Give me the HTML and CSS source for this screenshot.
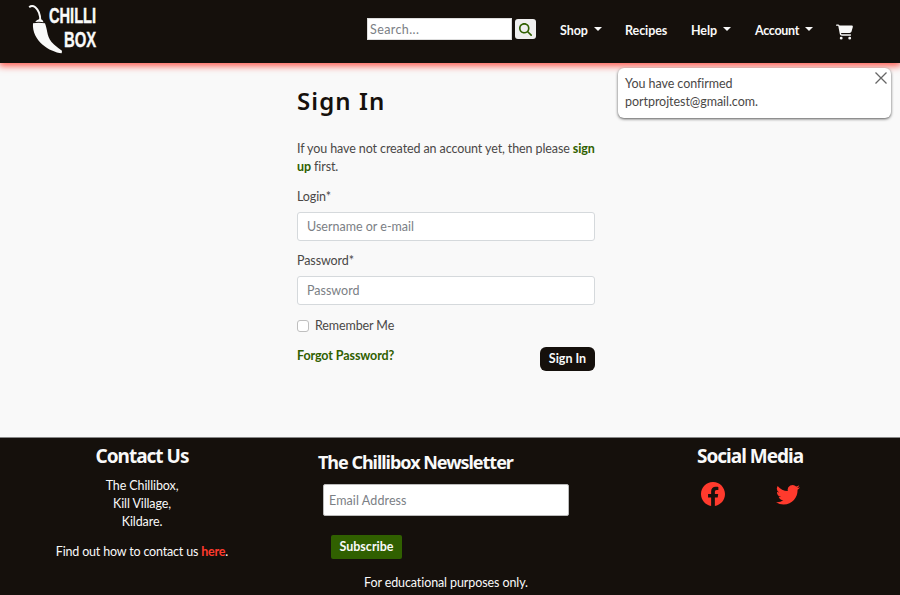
FILE: index.html
```html
<!DOCTYPE html>
<html lang="en">
<head>
<meta charset="utf-8">
<title>Sign In</title>
<link rel="stylesheet" href="styles.css">
</head>
<body>
<header class="header">
  <a class="logo">
    <svg width="76" height="58" viewBox="0 -4 76 58">
      <path d="M1.200 3.200Q4 .8 7.300 3.200Q12.300 7.500 12.300 16.500" fill="none" stroke="#f9f9f9" stroke-width="2"/>
      <path d="M7.200 18Q8 16 12 14.800Q15 15.800 15.600 18.200Q11.500 17.200 7.200 18Z" fill="#f9f9f9"/>
      <path d="M5 19.200Q10 18.300 17 19.200C20 27 18.500 34 26 40.500Q30 44 34 46.800L33.700 49.300C22 48 3.500 37 5 19.200Z" fill="#f9f9f9"/>
      <text x="21" y="18.700" font-size="22.500" textLength="47" lengthAdjust="spacingAndGlyphs">CHILLI</text>
      <text x="36" y="42.700" font-size="22.500" textLength="32" lengthAdjust="spacingAndGlyphs">BOX</text>
    </svg>
  </a>
  <form class="search">
    <input class="search-input" type="text" placeholder="Search...">
    <button class="search-button" type="button" aria-label="Search"><svg width="13" height="13" viewBox="0 0 512 512"><path fill="#306000" d="M416 208c0 45.900-14.900 88.300-40 122.700L502.600 457.400c12.500 12.500 12.500 32.800 0 45.300s-32.800 12.500-45.300 0L330.700 376c-34.400 25.200-76.800 40-122.700 40C93.100 416 0 322.900 0 208S93.100 0 208 0S416 93.100 416 208zM208 352a144 144 0 1 0 0-288 144 144 0 1 0 0 288z"/></svg></button>
  </form>
  <nav class="nav">
    <a class="nav-shop caret">Shop</a>
    <a class="nav-recipes">Recipes</a>
    <a class="nav-help caret">Help</a>
    <a class="nav-account caret">Account</a>
    <a class="cart"><svg width="17" height="16" viewBox="0 0 576 512"><path fill="#f9f9f9" d="M0 24C0 10.700 10.700 0 24 0H69.500c22 0 41.500 12.800 50.600 32h411c26.300 0 45.500 25 38.600 50.400l-41 152.300c-8.500 31.400-37 53.300-69.500 53.300H170.700l5.400 28.500c2.200 11.300 12.100 19.500 23.600 19.500H488c13.300 0 24 10.700 24 24s-10.700 24-24 24H199.700c-34.600 0-64.300-24.600-70.700-58.500L77.400 54.500c-.7-3.800-4-6.500-7.900-6.500H24C10.700 48 0 37.300 0 24zM128 464a48 48 0 1 1 96 0 48 48 0 1 1-96 0zm336-48a48 48 0 1 1 0 96 48 48 0 1 1 0-96z"/></svg></a>
  </nav>
</header>
<div class="toast">
  <p>You have confirmed<br>portprojtest@gmail.com.</p>
  <svg class="toast-close" width="12" height="12" viewBox="0 0 12 12"><path d="M.5 .5l11 11M11.500 .5l-11 11" stroke="#666" stroke-width="1.300"/></svg>
</div>
<main class="signin">
  <h1>Sign In</h1>
  <p class="intro">If you have not created an account yet, then please <a>sign<br>up</a> first.</p>
  <label class="label-login" for="login">Login*</label>
  <input class="field field-login" id="login" type="text" placeholder="Username or e-mail">
  <label class="label-password" for="password">Password*</label>
  <input class="field" id="password" type="password" placeholder="Password">
  <label class="remember"><input type="checkbox"><span>Remember Me</span></label>
  <div class="actions">
    <a class="forgot">Forgot Password?</a>
    <button class="submit" type="button"><span>Sign In</span></button>
  </div>
</main>
<footer class="footer">
  <section class="contact">
    <h2>Contact Us</h2>
    <p class="address">The Chillibox,<br>Kill Village,<br>Kildare.</p>
    <p class="find">Find out how to contact us <a>here</a>.</p>
  </section>
  <section class="newsletter">
    <h2>The Chillibox Newsletter</h2>
    <input class="email" type="email" placeholder="Email Address">
    <button class="subscribe" type="button">Subscribe</button>
    <p class="educational">For educational purposes only.</p>
  </section>
  <section class="social">
    <h2>Social Media</h2>
    <div class="icons">
      <svg width="24" height="24" viewBox="0 0 16 16"><path fill="#ff3a2d" d="M16 8.049c0-4.446-3.582-8.050-8-8.050C3.580 0-.002 3.603-.002 8.050c0 4.017 2.926 7.347 6.750 7.951v-5.625h-2.030V8.050H6.750V6.275c0-2.017 1.195-3.131 3.022-3.131.876 0 1.791.157 1.791.157v1.980h-1.009c-.993 0-1.303.621-1.303 1.258v1.510h2.218l-.354 2.326H9.250V16c3.824-.604 6.750-3.934 6.750-7.951z"/></svg>
      <svg width="24" height="24" viewBox="0 0 16 16"><path fill="#ff3a2d" d="M5.026 15c6.038 0 9.341-5.003 9.341-9.334 0-.140 0-.282-.006-.422A6.685 6.685 0 0 0 16 3.542a6.658 6.658 0 0 1-1.889.518 3.301 3.301 0 0 0 1.447-1.817 6.533 6.533 0 0 1-2.087.793A3.286 3.286 0 0 0 7.875 6.030a9.325 9.325 0 0 1-6.767-3.429 3.289 3.289 0 0 0 1.018 4.382A3.323 3.323 0 0 1 .64 6.575v.045a3.288 3.288 0 0 0 2.632 3.218 3.203 3.203 0 0 1-.865.115 3.230 3.230 0 0 1-.614-.057 3.283 3.283 0 0 0 3.067 2.277A6.588 6.588 0 0 1 .78 13.580a6.320 6.320 0 0 1-.78-.045A9.344 9.344 0 0 0 5.026 15z"/></svg>
    </div>
  </section>
</footer>
</body>
</html>
```
FILE: styles.css
```css
* { box-sizing: border-box; }
body {
  margin: 0;
  height: 595px;
  overflow: hidden;
  display: flex;
  flex-direction: column;
  background: #f9f9f9;
  color: #4a4847;
  font: 400 12.5px/18px Lato, "Open Sans", sans-serif;
  letter-spacing: -.1px;
  white-space: nowrap;
}
h1, h2, p { margin: 0; }
input, button { font: inherit; letter-spacing: inherit; margin: 0; }
::placeholder { color: #7b8085; opacity: 1; }

.header {
  height: 63px;
  flex: none;
  display: flex;
  align-items: flex-start;
  background: #15100c;
  box-shadow: 0 2px 7px 1px #ff5a50;
}
.logo { width: 339px; padding-left: 28px; margin-right: 28px; }
.logo svg { display: block; overflow: visible; }
.logo text { font-family: "Liberation Sans Narrow", "Liberation Sans", sans-serif; font-weight: 700; fill: #f9f9f9; stroke: #f9f9f9; stroke-width: .4px; }
.search { display: flex; gap: 3px; padding-top: 18px; }
.search-input { width: 145px; height: 22px; border: 1px solid #ddd; padding: 0 2px; background: #fff; letter-spacing: .4px; }
.search-button {
  width: 21px; height: 20px; margin-top: 1px; padding: 0; border: 0; border-radius: 3px;
  background: #efefef; display: grid; place-items: center;
}
.nav { display: flex; padding-top: 22px; color: #f9f9f9; font-weight: 700; letter-spacing: -.08px; }
.nav a { flex: none; }
.nav-shop { margin-left: 24px; width: 65px; }
.nav-recipes { width: 66px; }
.nav-help { width: 64px; }
.nav-account { width: 81px; letter-spacing: -.3px; }
.caret { display: flex; gap: 6px; }
.caret::after { content: ""; margin-top: 5px; width: 0; height: 0; border: 4px solid transparent; border-top-color: #f9f9f9; border-bottom: 0; }
.cart { padding-top: 2px; }
.cart svg { display: block; }

.toast {
  position: absolute; left: 618px; top: 68px; width: 273px; height: 50px;
  padding: 7px 0 0 7px; border-radius: 6px; background: #fff;
  box-shadow: 0 1px 3px #555; letter-spacing: -.05px;
}
.toast-close { position: absolute; right: 4px; top: 4px; }

.signin { width: 298px; height: 374px; margin-left: 297px; flex: none; display: flex; flex-direction: column; }
h1 { margin-top: 20px; color: #15100c; font: 600 24px/36px "Noto Sans", sans-serif; letter-spacing: 1.1px; }
.intro { margin-top: 21px; }
.intro a, .forgot { color: #306000; font-weight: 700; }
.label-login { margin-top: 12px; }
.field { height: 29px; flex: none; padding: 0 9px; border: 1px solid #d5d9dc; border-radius: 3px; background: #fff; margin-top: 6px; letter-spacing: 0; }
.label-password { margin-top: 11px; }
.field#password { margin-top: 6px; }
.remember { margin-top: 12px; display: flex; align-items: center; gap: 6px; }
.remember input { appearance: none; width: 12px; height: 12px; border: 1px solid #bfbfbf; border-radius: 3px; background: #fff; }
.actions { margin-top: 12px; display: flex; justify-content: space-between; }
.submit { width: 55px; height: 24px; padding: 0; border: 0; border-radius: 6px; background: #15100c; color: #f9f9f9; font-weight: 700; letter-spacing: 0; }

.footer { height: 158px; flex: none; display: flex; background: #15100c; border-top: 1px solid #888; color: #f9f9f9; }
h2 { font: 700 19px/24px "Noto Sans", sans-serif; letter-spacing: -1px; }
.contact { width: 284px; padding-top: 6px; text-align: center; }
.address { margin-top: 9px; }
.find { margin-top: 12px; letter-spacing: -.18px; }
.find a { color: #ff3a2d; font-weight: 700; }
.newsletter { width: 316px; padding: 12px 0 0 34px; display: flex; flex-direction: column; align-items: flex-start; }
.newsletter h2 { font-size: 18px; letter-spacing: -1.030px; }
.email { width: 246px; height: 32px; margin: 10px 0 0 5px; padding: 0 5px; border: 1px solid #bbb; border-radius: 2px; background: #fff; letter-spacing: .1px; }
.subscribe { width: 71px; height: 24px; margin: 19px 0 0 13px; padding: 0; border: 0; border-radius: 2px; background: #306000; color: #f9f9f9; font-weight: 700; letter-spacing: 0; }
.educational { margin: 15px 0 0 46px; }
.social { width: 300px; padding-top: 6px; text-align: center; }
.icons { display: flex; gap: 51px; padding: 14px 0 0 101px; }
.icons svg { display: block; }
```
